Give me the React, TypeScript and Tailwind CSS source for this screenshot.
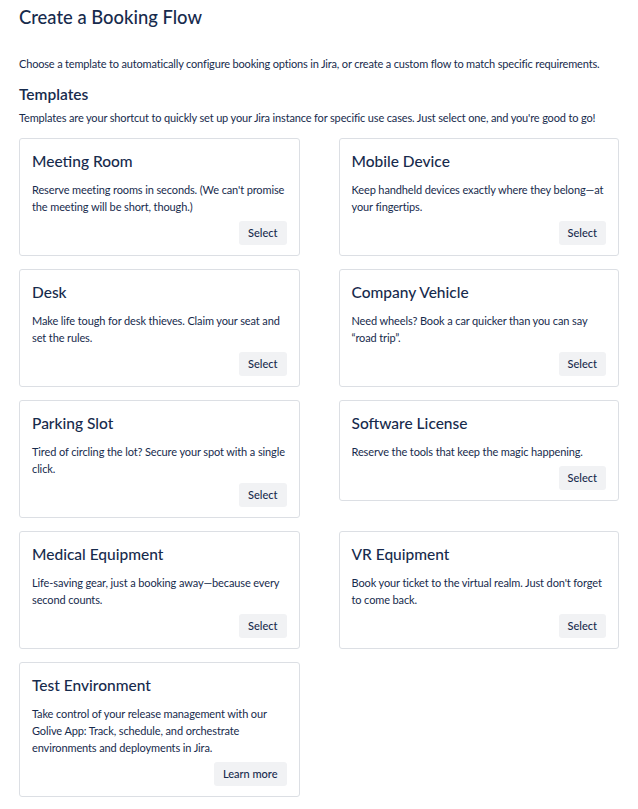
const templates = [
  {
    title: "Meeting Room",
    description: "Reserve meeting rooms in seconds. (We can't promise the meeting will be short, though.)",
    action: "Select",
  },
  {
    title: "Mobile Device",
    description: "Keep handheld devices exactly where they belong—at your fingertips.",
    action: "Select",
  },
  {
    title: "Desk",
    description: "Make life tough for desk thieves. Claim your seat and set the rules.",
    action: "Select",
  },
  {
    title: "Company Vehicle",
    description: "Need wheels? Book a car quicker than you can say \u201croad trip\u201d.",
    action: "Select",
  },
  {
    title: "Parking Slot",
    description: "Tired of circling the lot? Secure your spot with a single click.",
    action: "Select",
  },
  {
    title: "Software License",
    description: "Reserve the tools that keep the magic happening.",
    action: "Select",
  },
  {
    title: "Medical Equipment",
    description: "Life-saving gear, just a booking away—because every second counts.",
    action: "Select",
  },
  {
    title: "VR Equipment",
    description: "Book your ticket to the virtual realm. Just don't forget to come back.",
    action: "Select",
  },
  {
    title: "Test Environment",
    description:
      "Take control of your release management with our Golive App: Track, schedule, and orchestrate environments and deployments in Jira.",
    action: "Learn more",
  },
];

export default function App() {
  return (
    <div className="min-h-screen bg-white px-[19px] pt-[4px] pb-6 font-['Lato',sans-serif] text-[#172b4d]">
      <h1 className="text-[18.4px] leading-[26px] font-medium">Create a Booking Flow</h1>
      <p className="mt-[26px] text-[11px] leading-[16px] tracking-[-0.17px]">
        Choose a template to automatically configure booking options in Jira, or create a custom flow to match specific
        requirements.
      </p>
      <h2 className="mt-[12px] text-[15.5px] leading-[20px] font-semibold">Templates</h2>
      <p className="mt-[6px] text-[11px] leading-[16px] tracking-[-0.15px]">
        Templates are your shortcut to quickly set up your Jira instance for specific use cases. Just select one, and
        you're good to go!
      </p>

      <div className="mt-[12px] grid grid-cols-2 items-start gap-x-[39px] gap-y-[13px]">
        {templates.map((t) => (
          <div key={t.title} className="flex flex-col rounded-[3px] border border-[#dcdfe4] bg-white px-[12px] pt-[12px] pb-[10px]">
            <h3 className="text-[15.5px] leading-[20px] font-medium">{t.title}</h3>
            <p className="mt-[10px] text-[11px] leading-[17px] tracking-[-0.12px]">{t.description}</p>
            <div className="mt-[6px] flex justify-end">
              <button className="h-[24px] rounded-[3px] bg-[#f1f2f4] px-[9px] text-[11px] font-medium text-[#172b4d]">
                {t.action}
              </button>
            </div>
          </div>
        ))}
      </div>
    </div>
  );
}
